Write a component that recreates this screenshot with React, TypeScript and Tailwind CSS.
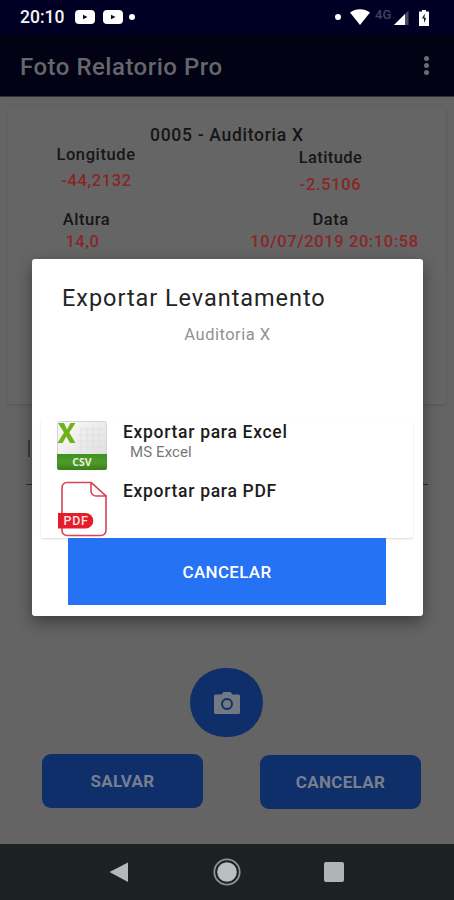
import clsx from 'clsx';

const YoutubeIcon = () => (
  <svg viewBox="0 0 20 14" className="h-[14px] w-[20px]">
    <rect width="20" height="14" rx="4" fill="#fff" />
    <path d="M8 4.8v4.400l4.500-2.200z" fill="#0a0a28" />
  </svg>
);

const WifiIcon = () => (
  <svg viewBox="0 0 20 16" className="h-[16px] w-[20px]">
    <path d="M0 3.600C5.500-1 14.500-1 20 3.600L10 16z" fill="#fff" />
  </svg>
);

const SignalIcon = () => (
  <svg viewBox="0 0 16 15" className="h-[15px] w-[16px]">
    <path d="M0 15L14.500 0.500V15z" fill="#4a4a5e" />
    <path d="M0 15L11 4V15z" fill="#fff" />
  </svg>
);

const BatteryIcon = () => (
  <svg viewBox="0 0 10 16" className="h-[16px] w-[10px]">
    <path d="M3 0h4v1.500h3V16H0V1.500h3z" fill="#fff" />
    <path d="M5.800 3.500L3 8.500h2v4.500L7.200 8H5.500z" fill="#14142c" />
  </svg>
);

const CameraIcon = () => (
  <svg viewBox="0 0 26 22" className="h-[22px] w-[26px]">
    <path
      d="M1.500 2.500H7.500L9.500 0H16.500L18.500 2.500H24.500A1.500 1.500 0 0 1 26 4V20.500A1.500 1.500 0 0 1 24.500 22H1.500A1.500 1.500 0 0 1 0 20.500V4A1.500 1.500 0 0 1 1.500 2.500z"
      fill="#737982"
    />
    <circle cx="13" cy="12" r="5" fill="none" stroke="#0f2f6b" strokeWidth="2" />
  </svg>
);

const CsvIcon = () => (
  <svg viewBox="0 0 50 50" className="h-[50px] w-[50px]">
    <defs>
      <linearGradient id="sheet" x1="0" y1="0" x2="1" y2="1">
        <stop offset="0" stopColor="#fcfcfc" />
        <stop offset="1" stopColor="#d9d9d9" />
      </linearGradient>
      <linearGradient id="band" x1="0" y1="0" x2="0" y2="1">
        <stop offset="0" stopColor="#3f8f22" />
        <stop offset="0.500" stopColor="#4f9a2c" />
        <stop offset="1" stopColor="#3a7f1a" />
      </linearGradient>
    </defs>
    <rect x="0.500" y="0.500" width="49" height="48" rx="2" fill="url(#sheet)" stroke="#d4d4d4" />
    <path
      d="M24 8h21M21 14h24M21 20h24M21 26h24M24 6v26M30 6v26M36 6v26M42 6v26"
      stroke="#dcdcdc"
      strokeWidth="0.700"
      fill="none"
    />
    <path
      d="M1 2h6l3 6.500L13.500 2H18.500L12.300 11.500L18.500 22H13L9.300 15.500L5.500 22H0.500L7 11.500z"
      fill="#72b11a"
    />
    <path d="M0 33h50v14a2 2 0 0 1-2 2H2a2 2 0 0 1-2-2z" fill="url(#band)" />
    <text
      x="25"
      y="44.800"
      textAnchor="middle"
      fontFamily="Open Sans, sans-serif"
      fontSize="10.500"
      fontWeight="700"
      fill="#e6f2dc"
    >
      CSV
    </text>
  </svg>
);

const PdfIcon = () => (
  <svg viewBox="0 0 50 56" className="ml-[1px] h-[56px] w-[50px]">
    <path
      d="M9 1.500H33L48 15V49.500a5 5 0 0 1-5 5H9a5 5 0 0 1-5-5V6.500a5 5 0 0 1 5-5z"
      fill="#fff"
      stroke="#d64552"
      strokeWidth="1.600"
    />
    <path
      d="M33 1.500V10a5 5 0 0 0 5 5H48z"
      fill="#fff"
      stroke="#d64552"
      strokeWidth="1.600"
      strokeLinejoin="round"
    />
    <path d="M0 32H27.500a7.800 7.800 0 0 1 0 15.600H0z" fill="#e51c2a" />
    <text
      x="5.500"
      y="44.300"
      fontFamily="Roboto, sans-serif"
      fontSize="12.500"
      fontWeight="500"
      textLength="24.500"
      fill="#fbe3e5"
    >
      PDF
    </text>
  </svg>
);

const StatusBar = () => (
  <div className="flex h-[34px] items-center bg-[#000024] pr-[25px] pl-[20px]">
    <span className="w-[55px] text-[17.5px] leading-[34px] font-medium text-[#f4f4f8]">20:10</span>
    <YoutubeIcon />
    <div className="ml-[8px] flex items-center gap-[6px]">
      <YoutubeIcon />
      <span className="h-[6px] w-[6px] rounded-full bg-white" />
    </div>
    <span className="ml-auto h-[6px] w-[6px] rounded-full bg-white" />
    <div className="ml-[9px] flex items-center">
      <WifiIcon />
      <span className="ml-[5px] w-[19px] pb-[6px] text-[13px] leading-none font-medium text-[#42425a]">
        4G
      </span>
      <SignalIcon />
      <span className="ml-[9px] pt-[1px]">
        <BatteryIcon />
      </span>
    </div>
  </div>
);

const Toolbar = () => (
  <div className="flex h-[63px] items-center justify-between border-b border-[#303038] bg-[#020214] pr-[25px] pl-[20px]">
    <h1 className="pt-[3px] text-[24px] leading-none font-medium tracking-[0.5px] text-[#66666c]">
      Foto Relatorio Pro
    </h1>
    <div className="flex flex-col gap-[2px]">
      {[0, 1, 2].map((dot) => (
        <span key={dot} className="h-[5px] w-[5px] rounded-full bg-[#6b6b72]" />
      ))}
    </div>
  </div>
);

interface ActionButtonProps {
  label: string;
  className?: string;
}

const ActionButton = ({ label, className }: ActionButtonProps) => (
  <button
    className={clsx(
      'h-[54px] w-[161px] rounded-[9px] bg-[#0f2f6b] pt-[2px] text-[17px] font-bold tracking-[0.3px] text-[#777f8f]',
      className,
    )}
  >
    {label}
  </button>
);

const SurveyCard = () => (
  <section className="mx-[8px] h-[296px] rounded-[2px] bg-[#656565] pt-[17px] text-[16.5px] leading-[20px] font-medium text-[#161616] shadow-[0_1px_3px_rgba(0,0,0,0.15)]">
    <div className="pl-[142px] text-[17.5px] tracking-[0.7px]">0005 - Auditoria X</div>
    <div className="flex justify-between">
      <div className="w-[176px]">
        <div className="text-center tracking-[0.6px]">Longitude</div>
        <div className="mt-[6px] pl-[1px] text-center tracking-[0.6px] text-[#8a2527]">-44,2132</div>
        <div className="mt-[19px] pr-[19px] text-center tracking-[0.5px]">Altura</div>
        <div className="mt-[2px] pr-[27px] text-center tracking-[0.6px] text-[#8a2527]">14,0</div>
      </div>
      <div className="w-[231px] pt-[3px]">
        <div className="text-center tracking-[0.4px]">Latitude</div>
        <div className="mt-[7px] text-center tracking-[0.6px] text-[#8a2527]">-2.5106</div>
        <div className="mt-[15px] text-center tracking-[0.5px]">Data</div>
        <div className="mt-[2px] pl-[8px] text-center tracking-[0.6px] whitespace-nowrap text-[#8a2527]">
          10/07/2019 20:10:58
        </div>
      </div>
    </div>
  </section>
);

const NavigationBar = () => (
  <nav className="flex h-[56px] items-center bg-[#1c2121] pl-[109px]">
    <svg viewBox="0 0 20 20" className="h-[20px] w-[20px]">
      <path d="M0.500 10L19 0.500V20z" fill="#b4b9ba" />
    </svg>
    <svg viewBox="0 0 28 28" className="ml-[84px] h-[28px] w-[28px]">
      <circle cx="14" cy="14" r="12.700" fill="none" stroke="#8d9293" strokeWidth="1.800" />
      <circle cx="14" cy="14" r="9.800" fill="#b9bebf" />
    </svg>
    <span className="ml-[83px] h-[20px] w-[20px] rounded-[2px] bg-[#afb4b5]" />
  </nav>
);

const ExportDialog = () => (
  <div
    role="dialog"
    className="absolute top-[259px] left-[32px] flex h-[357px] w-[391px] flex-col rounded-[3px] bg-white shadow-[0_6px_16px_rgba(0,0,0,0.4)]"
  >
    <h2 className="pt-[24px] pl-[30px] text-[23.5px] leading-[30px] tracking-[0.95px] text-[#242424]">
      Exportar Levantamento
    </h2>
    <p className="mt-[12px] text-center text-[16.5px] leading-[20px] tracking-[0.5px] text-[#929292]">
      Auditoria X
    </p>
    <div className="mt-[74px] mr-[10px] ml-[9px] h-[119px] rounded-[2px] bg-white pl-[16px] shadow-[0_1px_2px_rgba(0,0,0,0.15)]">
      <div className="flex h-[62px] pt-[2px]">
        <CsvIcon />
        <div className="ml-[16px]">
          <div className="text-[17.5px] leading-[22px] font-medium tracking-[0.7px] text-[#1c1c1c]">
            Exportar para Excel
          </div>
          <div className="pl-[7px] text-[15px] leading-[18px] tracking-[0.1px] text-[#777]">
            MS Excel
          </div>
        </div>
      </div>
      <div className="flex">
        <PdfIcon />
        <div className="ml-[15px] text-[17.5px] leading-[20px] font-medium tracking-[0.7px] text-[#1c1c1c]">
          Exportar para PDF
        </div>
      </div>
    </div>
    <button className="ml-[36px] h-[67px] w-[318px] bg-[#2672f4] pt-[3px] text-[17px] font-medium tracking-[0.3px] text-white">
      CANCELAR
    </button>
  </div>
);

const App = () => {
  return (
    <div className="relative flex h-[900px] w-[454px] flex-col overflow-hidden bg-[#646464] font-['Roboto',sans-serif]">
      <StatusBar />
      <Toolbar />
      <main className="flex flex-1 flex-col pt-[11px]">
        <SurveyCard />
        <div className="mx-[26px] mt-[33px] h-[48px] border-b border-[#2b2b2b] pl-[2px]">
          <div className="mt-[3px] h-[17px] w-[2px] bg-[#3c3c3c]" />
        </div>
        <button className="mt-[183px] ml-[190px] flex h-[69px] w-[73px] items-center justify-center rounded-full bg-[#0f2f6b]">
          <CameraIcon />
        </button>
        <div className="mt-[17px] flex justify-between pr-[33px] pl-[42px]">
          <ActionButton label="SALVAR" />
          <ActionButton label="CANCELAR" className="mt-[1px]" />
        </div>
      </main>
      <NavigationBar />
      <ExportDialog />
    </div>
  );
};

export default App;
